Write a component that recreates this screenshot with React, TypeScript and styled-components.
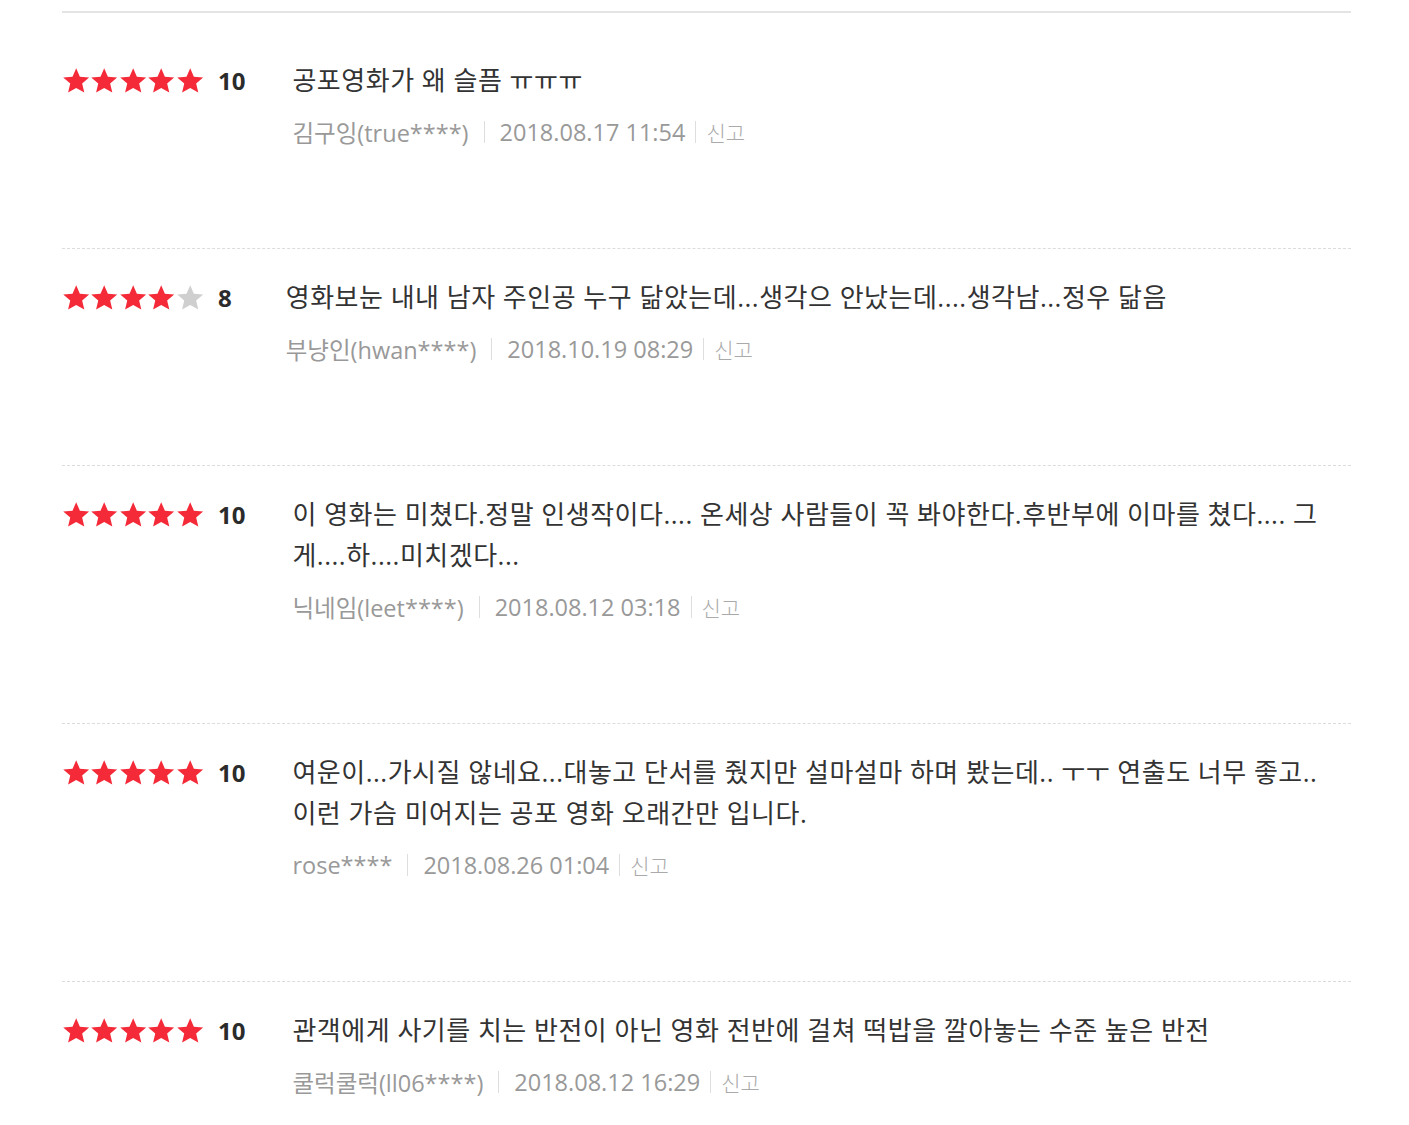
import React from 'react';
import styled, { createGlobalStyle } from 'styled-components';

const GlobalStyle = createGlobalStyle`
    body {
        margin: 0;
        background: #fff;
        font-family: "Open Sans", "Noto Sans CJK KR", sans-serif;
    }
`;

const List = styled.section`
    margin: 11px 0 0 62px;
    width: 1289px;
    border-top: 2px solid #e4e4e4;
`;

const Row = styled.article<{ $first?: boolean }>`
    display: flex;
    align-items: flex-start;
    padding: ${(p) => (p.$first ? '47px' : '28px')} 0 98px;
    border-top: ${(p) => (p.$first ? 'none' : '1px dashed #dcdcdc')};
`;

const Rating = styled.div`
    display: flex;
    align-items: center;
    height: 41px;
    flex-shrink: 0;
`;

const Stars = styled.div`
    display: flex;
    width: 142px;
`;

const StarIcon = styled.svg<{ $on: boolean }>`
    width: 28.4px;
    height: 28px;
    fill: ${(p) => (p.$on ? '#f52a38' : '#cfcfcf')};
`;

const Score = styled.strong<{ $short?: boolean }>`
    margin: 0 ${(p) => (p.$short ? '54px' : '47px')} 0 14px;
    font-size: 24px;
    font-weight: 700;
    color: #2b2b2b;
`;

const Body = styled.div`
    flex: 1;
    min-width: 0;
    padding-right: 4px;
`;

const Comment = styled.p`
    margin: 0;
    font-size: 26px;
    letter-spacing: 0.5px;
    line-height: 41px;
    color: #333;
`;

const Meta = styled.div`
    display: flex;
    align-items: center;
    margin-top: 13px;
    height: 36px;
    font-size: 23.5px;
    color: #999;
`;

const Bar = styled.span<{ $tight?: boolean }>`
    display: inline-block;
    width: 1px;
    height: 22px;
    background: #dedede;
    margin: 0 ${(p) => (p.$tight ? '10px' : '15px')};
`;

const Report = styled.button`
    border: 0;
    padding: 0;
    background: none;
    font-family: "Noto Sans CJK KR", sans-serif;
    font-size: 21px;
    font-weight: 300;
    color: #aaa;
    cursor: pointer;
`;

const Star: React.FC<{ on: boolean }> = ({ on }) => (
    <StarIcon $on={on} viewBox="0 0 24 24">
        <path d="M12 1l3.15 7.3 7.95.65-6 5.2 1.85 7.8L12 17.9l-6.95 4.05 1.85-7.8-6-5.2 7.95-.65z" />
    </StarIcon>
);

interface Review {
    stars: number;
    score: number;
    text: string;
    author: string;
    date: string;
}

const reviews: Review[] = [
    { stars: 5, score: 10, text: '공포영화가 왜 슬픔 ㅠㅠㅠ', author: '김구잉(true****)', date: '2018.08.17 11:54' },
    {
        stars: 4,
        score: 8,
        text: '영화보눈 내내 남자 주인공 누구 닮았는데...생각으 안났는데....생각남...정우 닮음',
        author: '부냥인(hwan****)',
        date: '2018.10.19 08:29',
    },
    {
        stars: 5,
        score: 10,
        text: '이 영화는 미쳤다.정말 인생작이다.... 온세상 사람들이 꼭 봐야한다.후반부에 이마를 쳤다.... 그게....하....미치겠다...',
        author: '닉네임(leet****)',
        date: '2018.08.12 03:18',
    },
    {
        stars: 5,
        score: 10,
        text: '여운이...가시질 않네요...대놓고 단서를 줬지만 설마설마 하며 봤는데.. ㅜㅜ 연출도 너무 좋고.. 이런 가슴 미어지는 공포 영화 오래간만 입니다.',
        author: 'rose****',
        date: '2018.08.26 01:04',
    },
    {
        stars: 5,
        score: 10,
        text: '관객에게 사기를 치는 반전이 아닌 영화 전반에 걸쳐 떡밥을 깔아놓는 수준 높은 반전',
        author: '쿨럭쿨럭(ll06****)',
        date: '2018.08.12 16:29',
    },
];

const App: React.FC = () => (
    <>
        <GlobalStyle />
        <List>
            {reviews.map((r, i) => (
                <Row key={i} $first={i === 0}>
                    <Rating>
                        <Stars>
                            {[0, 1, 2, 3, 4].map((n) => (
                                <Star key={n} on={n < r.stars} />
                            ))}
                        </Stars>
                        <Score $short={r.score < 10}>{r.score}</Score>
                    </Rating>
                    <Body>
                        <Comment>{r.text}</Comment>
                        <Meta>
                            <span>{r.author}</span>
                            <Bar />
                            <span>{r.date}</span>
                            <Bar $tight />
                            <Report>신고</Report>
                        </Meta>
                    </Body>
                </Row>
            ))}
        </List>
    </>
);

export default App;
